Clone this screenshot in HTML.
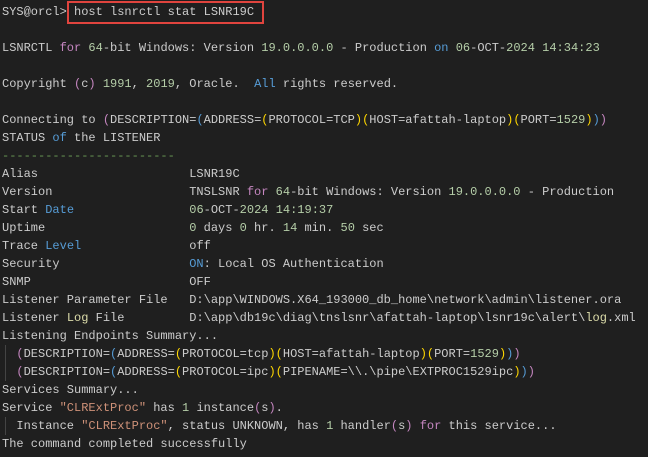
<!DOCTYPE html>
<html><head><meta charset="utf-8"><style>
html,body{margin:0;padding:0;background:#1f1f1f;width:648px;height:457px;overflow:hidden}
pre{margin:0;position:absolute;left:2px;top:3px;font-family:"Liberation Mono",monospace;font-size:12px;line-height:18px;color:#cccccc}
.k{color:#c586c0}.b{color:#569cd6}.y{color:#ffd700}.n{color:#b5cea8}.g{color:#6a9955}.s{color:#ce9178}.f{color:#dcdcaa}
.box{position:absolute;left:67px;top:1px;width:197px;height:23px;border:2px solid #e0443e;box-sizing:border-box}
.guide{position:absolute;left:5px;width:1px;background:#444}
</style></head><body>
<div class="box"></div>
<div class="guide" style="top:345px;height:36px"></div>
<div class="guide" style="top:417px;height:18px"></div>
<pre>SYS@orcl&gt; host lsnrctl stat LSNR19C

LSNRCTL <span class="k">for</span> <span class="n">64</span>-bit Windows: Version <span class="n">19.0.0.0.0</span> - Production <span class="b">on</span> <span class="n">06</span>-OCT-<span class="n">2024</span> <span class="n">14:34:23</span>

Copyright <span class="k">(</span>c<span class="k">)</span> <span class="n">1991</span>, <span class="n">2019</span>, Oracle.  <span class="b">All</span> rights reserved.

Connecting to <span class="k">(</span>DESCRIPTION=<span class="b">(</span>ADDRESS=<span class="y">(</span>PROTOCOL=TCP<span class="y">)(</span>HOST=afattah-laptop<span class="y">)(</span>PORT=<span class="n">1529</span><span class="y">)</span><span class="b">)</span><span class="k">)</span>
STATUS <span class="b">of</span> the LISTENER
<span class="g">------------------------</span>
Alias                     LSNR19C
Version                   TNSLSNR <span class="k">for</span> <span class="n">64</span>-bit Windows: Version <span class="n">19.0.0.0.0</span> - Production
Start <span class="b">Date</span>                <span class="n">06</span>-OCT-<span class="n">2024</span> <span class="n">14:19:37</span>
Uptime                    <span class="n">0</span> days <span class="n">0</span> hr. <span class="n">14</span> min. <span class="n">50</span> sec
Trace <span class="b">Level</span>               off
Security                  <span class="b">ON</span>: Local OS Authentication
SNMP                      OFF
Listener Parameter File   D:\app\WINDOWS.X64_193000_db_home\network\admin\listener.ora
Listener <span class="f">Log</span> File         D:\app\db19c\diag\tnslsnr\afattah-laptop\lsnr19c\alert\<span class="f">log</span>.xml
Listening Endpoints Summary...
  <span class="k">(</span>DESCRIPTION=<span class="b">(</span>ADDRESS=<span class="y">(</span>PROTOCOL=tcp<span class="y">)(</span>HOST=afattah-laptop<span class="y">)(</span>PORT=<span class="n">1529</span><span class="y">)</span><span class="b">)</span><span class="k">)</span>
  <span class="k">(</span>DESCRIPTION=<span class="b">(</span>ADDRESS=<span class="y">(</span>PROTOCOL=ipc<span class="y">)(</span>PIPENAME=\\.\pipe\EXTPROC1529ipc<span class="y">)</span><span class="b">)</span><span class="k">)</span>
Services Summary...
Service <span class="s">"CLRExtProc"</span> has <span class="n">1</span> instance<span class="k">(</span>s<span class="k">)</span>.
  Instance <span class="s">"CLRExtProc"</span>, status UNKNOWN, has <span class="n">1</span> handler<span class="k">(</span>s<span class="k">)</span> <span class="k">for</span> this service...
The command completed successfully</pre>
</body></html>
